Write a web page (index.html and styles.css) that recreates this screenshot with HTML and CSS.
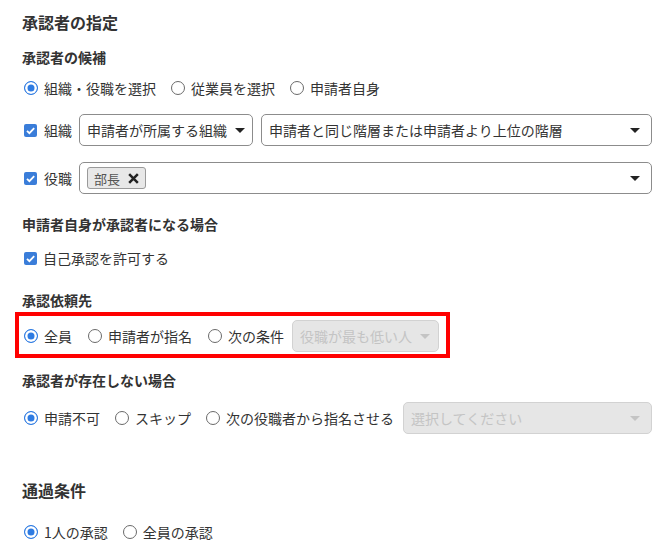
FILE: index.html
```html
<!DOCTYPE html>
<html lang="ja">
<head>
  <meta charset="UTF-8" />
  <title>承認者の指定</title>
  <link rel="stylesheet" href="styles.css">
</head>
<body>
  <h1 class="page-title">承認者の指定</h1>

  <h2 class="sub-title t-candidate">承認者の候補</h2>
  <div class="opt-row r-candidate">
    <label class="opt"><span class="radio on"></span>組織・役職を選択</label>
    <label class="opt"><span class="radio"></span>従業員を選択</label>
    <label class="opt"><span class="radio"></span>申請者自身</label>
  </div>

  <div class="field-row r-org">
    <label class="opt"><span class="check"><svg viewBox="0 0 13 13"><path d="M3 6.8l2.4 2.4L10.2 4.2" /></svg></span>組織</label>
    <div class="select s-org"><span>申請者が所属する組織</span><i class="caret"></i></div>
    <div class="select s-level"><span>申請者と同じ階層または申請者より上位の階層</span><i class="caret"></i></div>
  </div>

  <div class="field-row r-post">
    <label class="opt"><span class="check"><svg viewBox="0 0 13 13"><path d="M3 6.8l2.4 2.4L10.2 4.2" /></svg></span>役職</label>
    <div class="select s-post">
      <span class="tag">部長<svg viewBox="0 0 12 12"><path d="M2 2l8 8M10 2l-8 8" /></svg></span>
      <i class="caret"></i>
    </div>
  </div>

  <h2 class="sub-title t-self">申請者自身が承認者になる場合</h2>
  <div class="opt-row r-self">
    <label class="opt"><span class="check"><svg viewBox="0 0 13 13"><path d="M3 6.8l2.4 2.4L10.2 4.2" /></svg></span>自己承認を許可する</label>
  </div>

  <h2 class="sub-title t-request">承認依頼先</h2>
  <div class="highlight">
    <div class="opt-row">
      <label class="opt"><span class="radio on"></span>全員</label>
      <label class="opt"><span class="radio"></span>申請者が指名</label>
      <label class="opt"><span class="radio"></span>次の条件</label>
      <div class="select disabled s-cond"><span>役職が最も低い人</span><i class="caret"></i></div>
    </div>
  </div>

  <h2 class="sub-title t-none">承認者が存在しない場合</h2>
  <div class="opt-row r-none">
    <label class="opt"><span class="radio on"></span>申請不可</label>
    <label class="opt"><span class="radio"></span>スキップ</label>
    <label class="opt"><span class="radio"></span>次の役職者から指名させる</label>
    <div class="select disabled s-next"><span>選択してください</span><i class="caret"></i></div>
  </div>

  <h1 class="page-title t-pass">通過条件</h1>
  <div class="opt-row r-pass">
    <label class="opt"><span class="radio on"></span>1人の承認</label>
    <label class="opt"><span class="radio"></span>全員の承認</label>
  </div>
</body>
</html>
```

FILE: styles.css
```css
:root {
  --text: #333;
  --blue: #2e7be2;
  --border: #8c8c8c;
  --disabled-bg: #e6e6e6;
  --disabled-text: #c4c4c4;
}

body {
  margin: 0;
  padding: 10px 18px 0 22px;
  font-family: "Noto Sans CJK JP", "Noto Sans", sans-serif;
  font-size: 14px;
  color: var(--text);
  background: #fff;
}

.page-title {
  font-size: 16px;
  font-weight: bold;
  line-height: 24px;
  margin: 0;
}

.sub-title {
  font-size: 14px;
  font-weight: bold;
  line-height: 24px;
  margin: 0;
}

.t-candidate { margin-top: 11px; }
.t-self { margin-top: 18px; }
.t-request { margin-top: 18px; }
.t-none { margin-top: 10px; }
.t-pass { margin-top: 44px; }

.opt-row {
  display: flex;
  align-items: center;
  gap: 14px;
  height: 24px;
}

.r-candidate { margin-top: 7px; gap: 13px; }
.r-self { margin-top: 10px; }
.r-none { margin-top: 10px; height: 32px; gap: 13px; }
.r-pass { margin-top: 18px; gap: 13px; }

.opt {
  display: flex;
  align-items: center;
  gap: 6px;
  white-space: nowrap;
  line-height: 24px;
}

.radio {
  width: 14px;
  height: 14px;
  box-sizing: border-box;
  border: 1.5px solid #6a6a6a;
  border-radius: 50%;
  margin-left: 2px;
}

.radio.on {
  border-color: var(--blue);
  background: var(--blue);
  box-shadow: inset 0 0 0 2.5px #fff;
}

.check {
  width: 13px;
  height: 13px;
  margin-left: 2px;
  border-radius: 2px;
  background: #3a7dd9;
  display: flex;
}

.check svg {
  width: 13px;
  height: 13px;
  fill: none;
  stroke: #fff;
  stroke-width: 1.8;
}

.field-row {
  display: flex;
  align-items: center;
  gap: 8px;
  height: 32px;
}

.r-org { margin-top: 14px; }
.r-post { margin-top: 16px; }

.field-row .opt { width: 49px; gap: 7px; }

.select {
  height: 32px;
  box-sizing: border-box;
  border: 1px solid var(--border);
  border-radius: 5px;
  display: flex;
  align-items: center;
  padding: 0 11px 0 7px;
  gap: 8px;
  white-space: nowrap;
}

.select span { flex: 1; }

.caret {
  width: 0;
  height: 0;
  margin-left: auto;
  border-left: 5px solid transparent;
  border-right: 5px solid transparent;
  border-top: 5px solid #222;
}

.s-org { width: 174px; padding-right: 18px; }
.s-level { flex: 1; }
.s-post { flex: 1; padding-left: 7px; }

.select .tag {
  flex: none;
  display: flex;
  align-items: center;
  gap: 7px;
  height: 22px;
  box-sizing: border-box;
  padding: 0 5px 0 6px;
  background: #e8e8e8;
  border: 1px solid #9a9a9a;
  border-radius: 3px;
  font-size: 13px;
  color: #555;
}

.tag svg {
  width: 13px;
  height: 13px;
  stroke: #222;
  stroke-width: 2.3;
}

.select.disabled {
  background: var(--disabled-bg);
  border-color: #d2d2d2;
  color: var(--disabled-text);
}

.select.disabled .caret { border-top-color: #c4c4c4; }

.s-cond { width: 147px; margin-left: -6px; }
.s-next { flex: 1; margin-left: -4px; }

.highlight {
  border: 4px solid #f00;
  margin-left: -7px;
  width: 424px;
  padding: 4px 0 2px 3px;
}

.highlight .opt-row { height: 32px; gap: 14px; }
```
